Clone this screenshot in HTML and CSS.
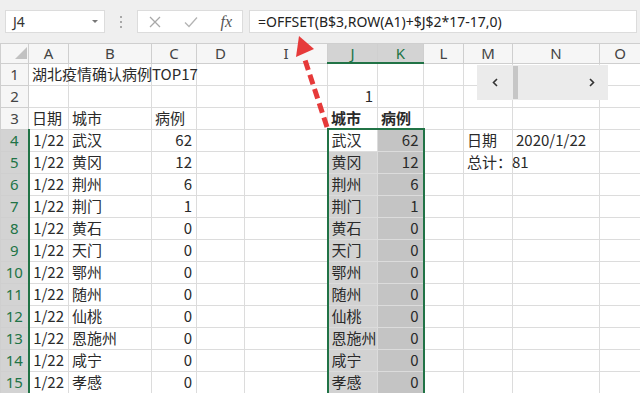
FILE: index.html
```html
<!doctype html><html lang="zh">
<head><meta charset="utf-8"/><title>湖北疫情确认病例</title>
<meta name="viewport" content="width=device-width, initial-scale=1">
<link rel="stylesheet" href="styles.css">
</head>
<body>

<div class="fbar">
	<div class="namebox"><span>J4</span><i class="drop"></i></div>
	<div class="dots"><i></i><i></i><i></i></div>
	<div class="fnbtns">
		<svg width="12" height="12" viewBox="0 0 12 12"><path d="M1 1L11 11M11 1L1 11" stroke="#a8a8a8" stroke-width="1.3" fill="none"/></svg>
		<svg width="14" height="12" viewBox="0 0 14 12"><path d="M1 6.5L5 10.5L13 1.5" stroke="#b4b4b4" stroke-width="1.3" fill="none"/></svg>
		<span class="fx">fx</span>
	</div>
	<div class="formula">=OFFSET(B$3,ROW(A1)+$J$2*17-17,0)</div>
</div>

<table class="sheet">
<colgroup>
	<col style="width:28px"><col style="width:40px"><col style="width:83px"><col style="width:45px"><col style="width:48px"><col style="width:83px">
	<col style="width:50px"><col style="width:46px"><col style="width:40px"><col style="width:49px"><col style="width:87px"><col style="width:41px">
</colgroup>
<tr class="hdr"><th class="corner"><i class="tri"></i></th><th class="ch">A</th><th class="ch">B</th><th class="ch">C</th><th class="ch">D</th><th class="ch">I</th><th class="ch hl">J</th><th class="ch hl">K</th><th class="ch">L</th><th class="ch">M</th><th class="ch">N</th><th class="ch">O</th></tr>
<tr><th class="rh">1</th><td>湖北疫情确认病例TOP17</td><td></td><td></td><td></td><td></td><td></td><td></td><td></td><td></td><td></td><td></td></tr>
<tr><th class="rh">2</th><td></td><td></td><td></td><td></td><td></td><td class="r">1</td><td></td><td></td><td></td><td></td><td></td></tr>
<tr><th class="rh">3</th><td>日期</td><td>城市</td><td>病例</td><td></td><td></td><td class="b">城市</td><td class="b">病例</td><td></td><td></td><td></td><td></td></tr>
<tr><th class="rh hl">4</th><td class="r">1/22</td><td>武汉</td><td class="r">62</td><td></td><td></td><td class="sj top act">武汉</td><td class="sk top r">62</td><td></td><td>日期</td><td>2020/1/22</td><td></td></tr>
<tr><th class="rh hl">5</th><td class="r">1/22</td><td>黄冈</td><td class="r">12</td><td></td><td></td><td class="sj">黄冈</td><td class="sk r">12</td><td></td><td>总计：81</td><td></td><td></td></tr>
<tr><th class="rh hl">6</th><td class="r">1/22</td><td>荆州</td><td class="r">6</td><td></td><td></td><td class="sj">荆州</td><td class="sk r">6</td><td></td><td></td><td></td><td></td></tr>
<tr><th class="rh hl">7</th><td class="r">1/22</td><td>荆门</td><td class="r">1</td><td></td><td></td><td class="sj">荆门</td><td class="sk r">1</td><td></td><td></td><td></td><td></td></tr>
<tr><th class="rh hl">8</th><td class="r">1/22</td><td>黄石</td><td class="r">0</td><td></td><td></td><td class="sj">黄石</td><td class="sk r">0</td><td></td><td></td><td></td><td></td></tr>
<tr><th class="rh hl">9</th><td class="r">1/22</td><td>天门</td><td class="r">0</td><td></td><td></td><td class="sj">天门</td><td class="sk r">0</td><td></td><td></td><td></td><td></td></tr>
<tr><th class="rh hl">10</th><td class="r">1/22</td><td>鄂州</td><td class="r">0</td><td></td><td></td><td class="sj">鄂州</td><td class="sk r">0</td><td></td><td></td><td></td><td></td></tr>
<tr><th class="rh hl">11</th><td class="r">1/22</td><td>随州</td><td class="r">0</td><td></td><td></td><td class="sj">随州</td><td class="sk r">0</td><td></td><td></td><td></td><td></td></tr>
<tr><th class="rh hl">12</th><td class="r">1/22</td><td>仙桃</td><td class="r">0</td><td></td><td></td><td class="sj">仙桃</td><td class="sk r">0</td><td></td><td></td><td></td><td></td></tr>
<tr><th class="rh hl">13</th><td class="r">1/22</td><td>恩施州</td><td class="r">0</td><td></td><td></td><td class="sj">恩施州</td><td class="sk r">0</td><td></td><td></td><td></td><td></td></tr>
<tr><th class="rh hl">14</th><td class="r">1/22</td><td>咸宁</td><td class="r">0</td><td></td><td></td><td class="sj">咸宁</td><td class="sk r">0</td><td></td><td></td><td></td><td></td></tr>
<tr><th class="rh hl">15</th><td class="r">1/22</td><td>孝感</td><td class="r">0</td><td></td><td></td><td class="sj">孝感</td><td class="sk r">0</td><td></td><td></td><td></td><td></td></tr>
</table>

<!-- 滚动条控件（浮动在单元格上） -->
<div class="spin">
	<span class="btn"><svg width="6" height="9" viewBox="0 0 6 9"><path d="M5 1L1.5 4.5L5 8" stroke="#333" stroke-width="1.6" fill="none"/></svg></span>
	<span class="thumb"></span>
	<span class="btn rt"><svg width="6" height="9" viewBox="0 0 6 9"><path d="M1 1L4.5 4.5L1 8" stroke="#333" stroke-width="1.6" fill="none"/></svg></span>
</div>

<!-- 红色虚线箭头 -->
<svg class="arrow" width="640" height="393" viewBox="0 0 640 393">
	<path d="M327 127L305 60" stroke="#e63a3a" stroke-width="5" stroke-dasharray="10 5" fill="none"/>
	<polygon points="299,36 296,57 314,49" fill="#e63a3a"/>
</svg>

</body></html>
```

FILE: styles.css
```css
* {box-sizing: border-box;}
body {
	margin: 0; width: 640px; height: 393px; overflow: hidden; position: relative;
	font-family: "Noto Sans CJK SC", "Noto Sans", sans-serif; color: #222; background: #fff;
}

/* 编辑栏 */
.fbar {display: flex; align-items: center; height: 43px; padding: 0 3px 0 5px; background: #efefef;}
.namebox {
	width: 100px; height: 23px; background: #fff; border: 1px solid #dcdcdc;
	display: flex; align-items: center; justify-content: space-between;
	padding: 0 6px 0 7px; font-family: "Noto Sans", sans-serif; font-size: 14px; color: #333;
}
.drop {width: 0; height: 0; border-left: 3px solid transparent; border-right: 3px solid transparent; border-top: 3px solid #777;}
.dots {width: 32px; display: flex; flex-direction: column; align-items: center; gap: 3px;}
.dots i {width: 2px; height: 2px; background: #a8a8a8;}
.fnbtns {
	width: 106px; height: 23px; background: #fff; border: 1px solid #dcdcdc;
	display: flex; align-items: center; justify-content: space-between; padding: 0 10px 0 11px;
}
.fx {font-family: "Liberation Serif", serif; font-style: italic; font-size: 16px; color: #555;}
.formula {
	flex: 1; margin-left: 6px; height: 23px; background: #fff; border: 1px solid #dcdcdc;
	font-family: "Noto Sans", sans-serif; font-size: 14px; line-height: 21px; padding-left: 8px; color: #222;
}

/* 表格 */
.sheet {border-collapse: collapse; table-layout: fixed; width: 640px; font-size: 15px;}
.sheet tr {height: 22px;}
.sheet tr.hdr {height: 19px;}
.sheet td {
	border: 1px solid #dcdcdc; padding: 0 4px 0 3px; white-space: nowrap; overflow: visible;
	line-height: 20px; vertical-align: middle; color: #2a2a2a;
}
.sheet th {
	border: 1px solid #cfcfcf; padding: 0; font-weight: normal; text-align: center;
	font-family: "Noto Sans", sans-serif; font-size: 15px; color: #444; background: #f6f6f6;
	line-height: 18px;
}
.ch {border-bottom-color: #bdbdbd;}
.rh {border-right-color: #bdbdbd;}
.ch.hl {background: #d3d3d3; color: #217346; border-bottom: 2px solid #217346;}
.rh.hl {background: #d3d3d3; color: #217346; border-right: 2px solid #217346;}
.corner {text-align: right !important; vertical-align: bottom;}
.tri {display: inline-block; width: 0; height: 0; border-left: 12px solid transparent; border-bottom: 12px solid #c2c2c2; margin: 0 1px 1px 0;}

.r {text-align: right;}
.b {font-weight: bold;}
.sj {background: #d2d2d2; border-left: 2px solid #217346 !important; border-bottom-color: #bcbcbc;}
.sk {background: #c4c4c4; border-right: 2px solid #217346 !important; border-bottom-color: #b4b4b4;}
.top {border-top: 2px solid #217346 !important;}
.act {background: #fff;}

/* 滚动条控件 */
.spin {
	position: absolute; left: 477px; top: 65px; width: 131px; height: 35px;
	background: #ebebeb; display: flex; align-items: center;
}
.btn {width: 36px; display: flex; justify-content: center;}
.btn.rt {margin-left: auto; width: 33px;}
.thumb {width: 5px; height: 33px; background: #c6c6c6;}

.arrow {position: absolute; left: 0; top: 0; pointer-events: none;}
```
